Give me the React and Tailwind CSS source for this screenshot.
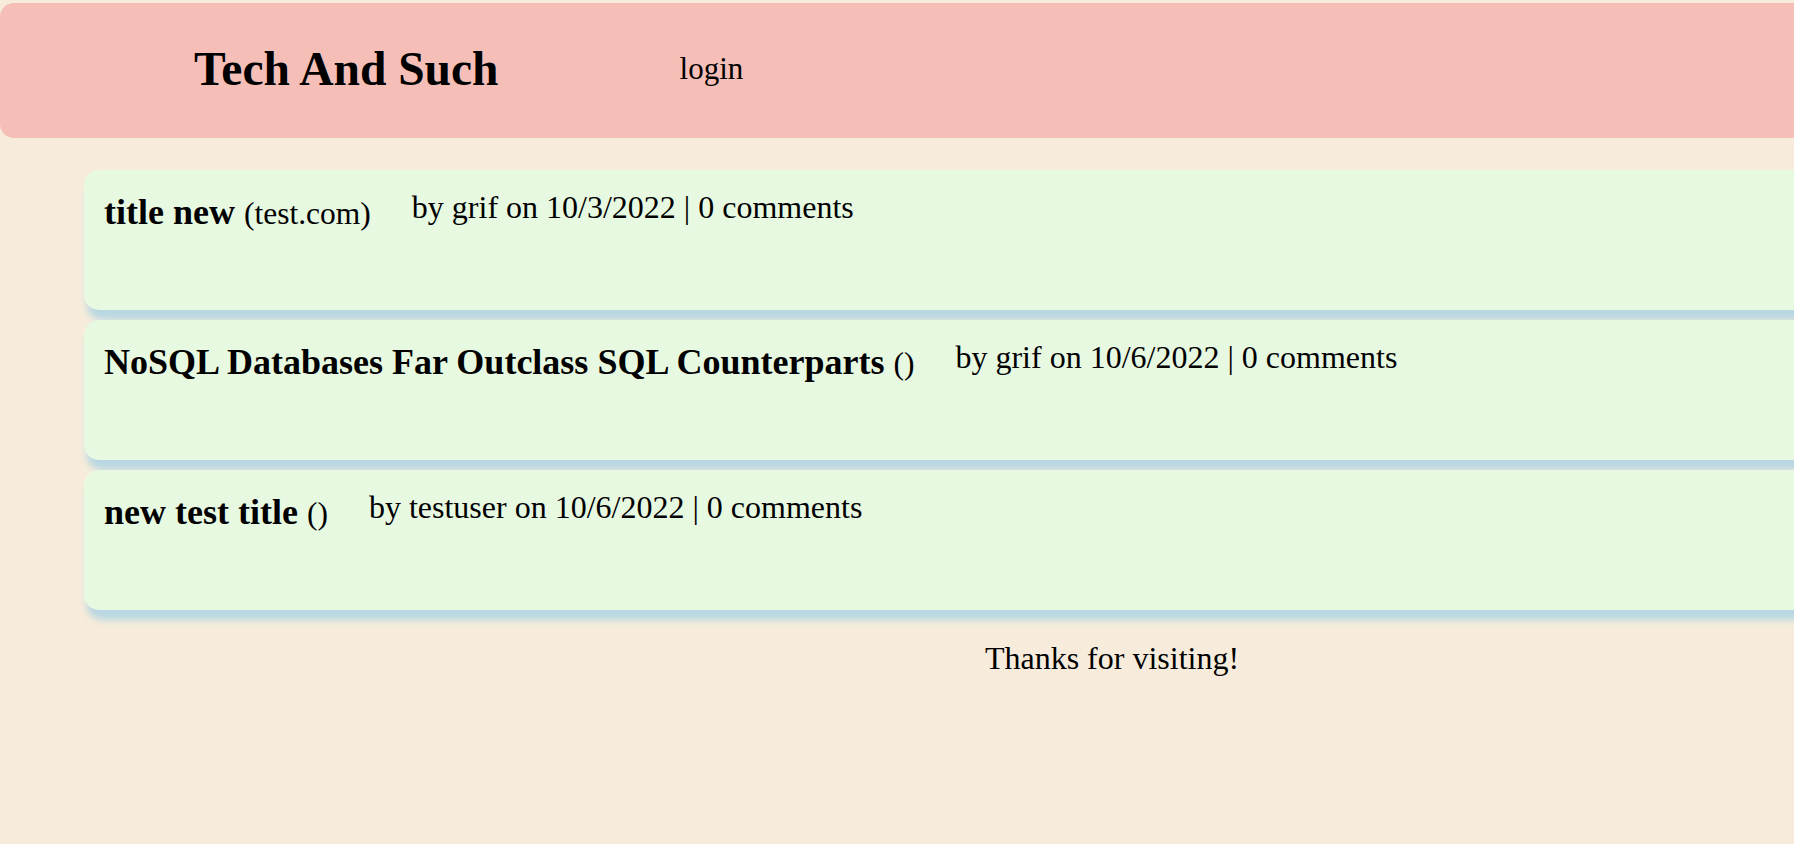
import React from "react";

const posts = [
  { title: "title new", site: "test.com", author: "grif", date: "10/3/2022", comments: 0 },
  { title: "NoSQL Databases Far Outclass SQL Counterparts", site: "", author: "grif", date: "10/6/2022", comments: 0 },
  { title: "new test title", site: "", author: "testuser", date: "10/6/2022", comments: 0 },
];

const PostCard = ({ post }) => (
  <div className="flex h-[140px] items-start rounded-[15px] bg-[#e8f9e2] pl-[20px] pt-[21px] shadow-[3px_10px_7px_#b8d7e3]">
    <div className="mt-[3px] whitespace-nowrap text-[36px] leading-none">
      <span className="font-bold">{post.title}</span>{" "}
      <span className="text-[31.5px]">({post.site})</span>
    </div>
    <div className="ml-[41px] whitespace-nowrap text-[32px] leading-none">
      by {post.author} on {post.date} | {post.comments} comments
    </div>
  </div>
);

const App = () => {
  return (
    <div className="h-[844px] w-[1794px] overflow-hidden bg-[#f7ecdb] font-['Liberation_Serif',serif] text-black">
      <div className="w-[2224px]">
        {/* header */}
        <div className="mt-[3px] flex h-[135px] items-start rounded-[14px] bg-[#f5bfb8] pl-[194px]">
          <h1 className="mt-[43px] text-[47.5px] font-bold leading-none">Tech And Such</h1>
          <span className="ml-[181px] mt-[50px] text-[31px] leading-none">login</span>
        </div>

        {/* posts */}
        <div className="mt-[32px] flex flex-col gap-[10px] pl-[84px]">
          {posts.map((p, i) => (
            <PostCard key={i} post={p} />
          ))}
        </div>

        <div className="mt-[32px] text-center text-[32px] leading-none">Thanks for visiting!</div>
      </div>
    </div>
  );
};

export default App;
